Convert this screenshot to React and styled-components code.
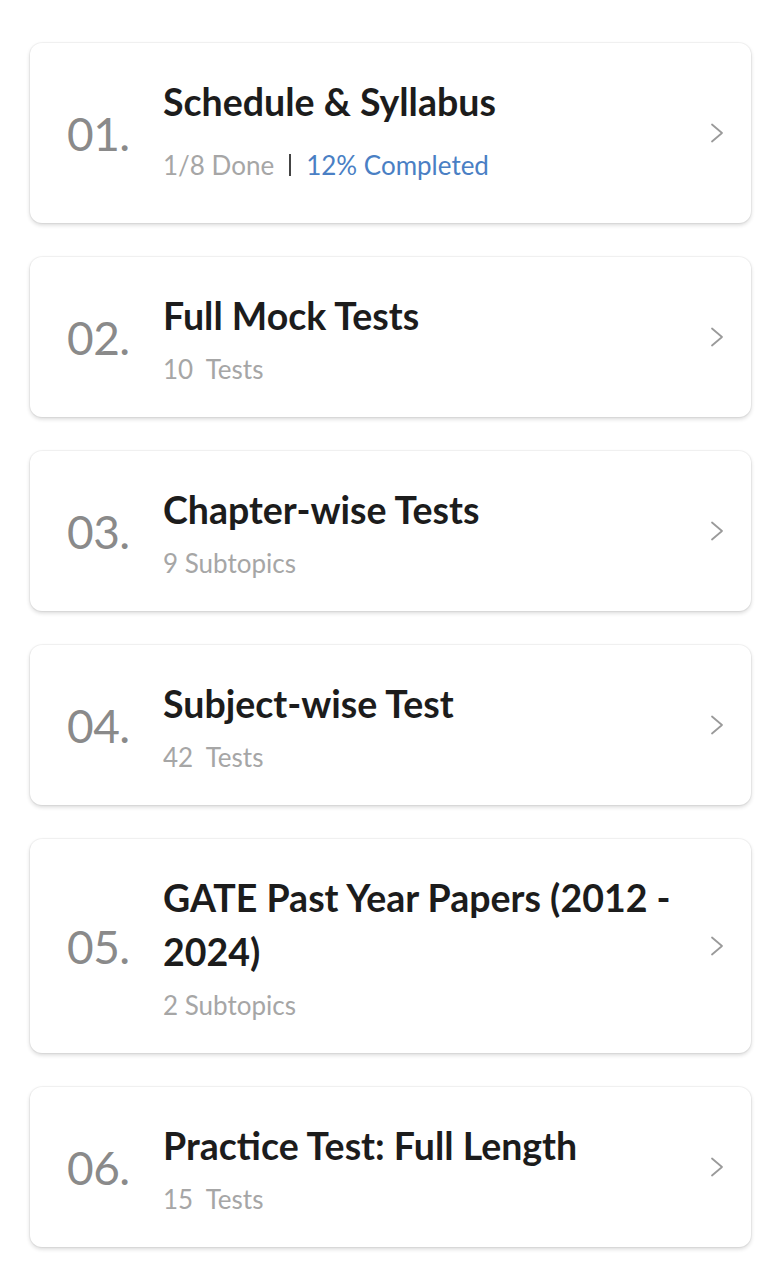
import React from "react";
import styled, { createGlobalStyle } from "styled-components";

const Global = createGlobalStyle`
  html, body { margin: 0; padding: 0; background: #ffffff; }
  body { font-family: Lato, "Noto Sans", sans-serif; }
`;

const Page = styled.div`
  display: flex;
  flex-direction: column;
  gap: 34px;
  padding: 43px 30px 34px 30px;
`;

const Card = styled.div`
  display: flex;
  align-items: center;
  background: #fff;
  border-radius: 12px;
  box-shadow: 0 0 0 1px rgba(0, 0, 0, 0.04), 0 2px 4px rgba(0, 0, 0, 0.16);
  padding: 32px 27px 32px 37px;
`;

const Num = styled.div`
  width: 96px;
  flex: none;
  font-size: 46px;
  font-weight: 400;
  color: #8a8a8a;
  letter-spacing: -0.5px;
`;

const Body = styled.div`
  flex: 1;
  display: flex;
  flex-direction: column;
`;

const Title = styled.div`
  font-size: 37.5px;
  line-height: 54px;
  font-weight: 700;
  color: #1c1c1c;
`;

const Sub = styled.div`
  display: flex;
  align-items: center;
  margin-top: 10px;
  padding: ${(p) => (p.$pad ? "10px 0" : "0")};
  font-size: 26px;
  line-height: 32px;
  color: #a6a6a6;
  white-space: pre;
`;

const Sep = styled.span`
  display: inline-block;
  width: 2px;
  height: 22px;
  background: #444;
  margin: 0 15px;
`;

const Blue = styled.span`
  color: #4a7fc4;
`;

const Chevron = styled.svg`
  flex: none;
  width: 14px;
  height: 20px;
  margin-left: 12px;
`;

const items = [
  { n: "01.", title: "Schedule & Syllabus", progress: true },
  { n: "02.", title: "Full Mock Tests", sub: "10  Tests" },
  { n: "03.", title: "Chapter-wise Tests", sub: "9 Subtopics" },
  { n: "04.", title: "Subject-wise Test", sub: "42  Tests" },
  { n: "05.", title: "GATE Past Year Papers (2012 - 2024)", sub: "2 Subtopics" },
  { n: "06.", title: "Practice Test: Full Length", sub: "15  Tests" },
];

export default function App() {
  return (
    <>
      <Global />
      <Page>
        {items.map((it) => (
          <Card key={it.n}>
            <Num>{it.n}</Num>
            <Body>
              <Title>{it.title}</Title>
              {it.progress ? (
                <Sub $pad>
                  1/8 Done<Sep />
                  <Blue>12% Completed</Blue>
                </Sub>
              ) : (
                <Sub>{it.sub}</Sub>
              )}
            </Body>
            <Chevron viewBox="0 0 14 20">
              <path d="M2 1.5 L12 10 L2 18.5" fill="none" stroke="#9a9a9a" strokeWidth="1.8" strokeLinecap="round" strokeLinejoin="round" />
            </Chevron>
          </Card>
        ))}
      </Page>
    </>
  );
}
